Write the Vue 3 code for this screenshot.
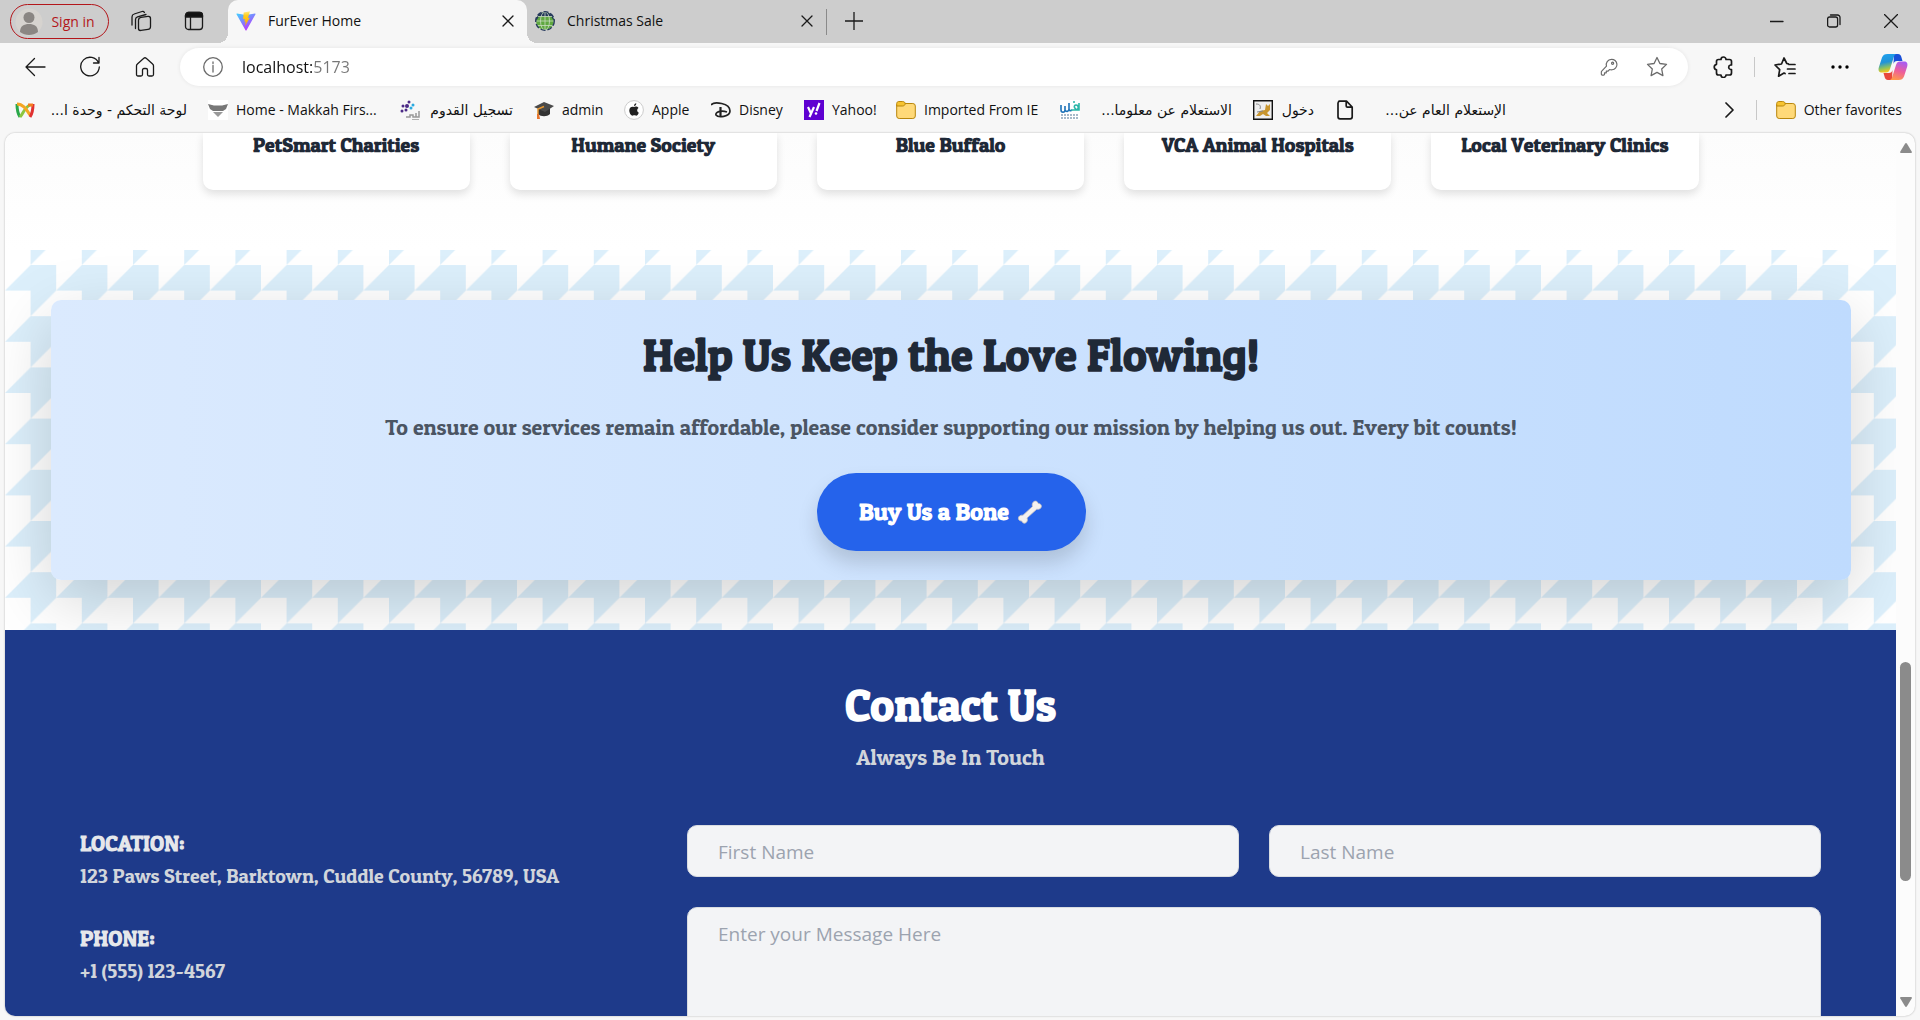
<script setup>
const bookmarks = [
  { icon: 'ribbon', label: 'لوحة التحكم - وحدة ا...', rtl: true, width: 172 },
  { icon: 'shield', label: 'Home - Makkah Firs...', width: 171 },
  { icon: 'dots', label: 'تسجيل القدوم', rtl: true, width: 113 },
  { icon: 'cap', label: 'admin', width: 69 },
  { icon: 'apple', label: 'Apple', width: 66 },
  { icon: 'disney', label: 'Disney', width: 72 },
  { icon: 'yahoo', label: 'Yahoo!', width: 71 },
  { icon: 'folder', label: 'Imported From IE', width: 143 },
  { icon: 'daman', label: 'الاستعلام عن معلوما...', rtl: true, width: 172 },
  { icon: 'cat', label: 'دخول', rtl: true, width: 61 },
  { icon: 'page', label: 'الإستعلام العام عن...', rtl: true, width: 171 }
]

const partners = [
  'PetSmart Charities',
  'Humane Society',
  'Blue Buffalo',
  'VCA Animal Hospitals',
  'Local Veterinary Clinics'
]

const details = [
  { title: 'LOCATION:', text: '123 Paws Street, Barktown, Cuddle County, 56789, USA' },
  { title: 'PHONE:', text: '+1 (555) 123-4567' }
]
</script>

<template>
  <div class="browser">
    <header class="tabs">
      <button class="signin" type="button">
        <svg width="28" height="28" viewBox="0 0 28 28">
          <circle cx="14" cy="14" r="13.5" fill="#d6d3cf" />
          <circle cx="14" cy="9.500" r="5.500" fill="#8a8683" />
          <path d="M5 24c0-6 4-8 9-8s9 2 9 8c-5 4-13 4-18 0z" fill="#8a8683" />
        </svg>
        Sign in
      </button>
      <button class="tool workspaces" type="button" aria-label="Workspaces">
        <svg width="22" height="22" viewBox="0 0 22 22" class="line">
          <rect x="8.500" y="7" width="12" height="13" rx="2.500" transform="skewY(-8) translate(0 2)" />
          <path d="M5.500 18.500V9.500c0-1.500.7-2.300 2-2.700l8.500-2.300M2 15V7c0-1.600.8-2.600 2.200-3L12 1.500c1-.3 2 .2 2.400 1" />
        </svg>
      </button>
      <button class="tool actions" type="button" aria-label="Tab actions">
        <svg width="20" height="20" viewBox="0 0 20 20" class="line">
          <rect x="1.500" y="1.500" width="17" height="17" rx="3" />
          <path d="M1.500 6V4.500a3 3 0 0 1 3-3h11a3 3 0 0 1 3 3V6z" fill="#111" />
          <path d="M6.500 6v12" />
        </svg>
      </button>
      <div class="tab active">
        <svg width="20" height="20" viewBox="0 0 20 20">
          <defs>
            <linearGradient id="vt" x1="0" y1="0" x2=".6" y2="1">
              <stop offset="0" stop-color="#41d1ff" /><stop offset="1" stop-color="#bd34fe" />
            </linearGradient>
            <linearGradient id="vb" x1="0" y1="0" x2="0" y2="1">
              <stop offset="0" stop-color="#ffea83" /><stop offset=".3" stop-color="#ffcd1c" /><stop offset="1" stop-color="#ffa800" />
            </linearGradient>
          </defs>
          <path d="M19.500 3.200 10.500 19.300a.6.6 0 0 1-1 0L.500 3.200c-.2-.4.1-.8.5-.7l9 1.600 9-1.600c.4-.1.7.3.5.7z" fill="url(#vt)" />
          <path d="m14 .300-6.300 1.200-.6 6.800 1.900-.4-.6 2.900 1.300-.4-.7 4.500 4.800-8.200-1.800.4z" fill="url(#vb)" />
        </svg>
        <span>FurEver Home</span>
        <button type="button" aria-label="Close tab">
          <svg width="12" height="12" viewBox="0 0 12 12" class="line"><path d="m1 1 10 10M11 1 1 11" /></svg>
        </button>
      </div>
      <div class="tab">
        <svg width="20" height="20" viewBox="0 0 20 20">
          <circle cx="10" cy="10" r="9" fill="#5fa840" />
          <path d="M1 10a9 9 0 0 1 18 0l-3-4.500H4z" fill="#24365c" />
          <path d="M10 1v18M1 10h18M3 5.500h14M3 14.500h14" stroke="#c9dcc0" stroke-width=".8" fill="none" />
          <ellipse cx="10" cy="10" rx="4.500" ry="9" stroke="#c9dcc0" stroke-width=".8" fill="none" />
          <circle cx="10" cy="10" r="9.300" fill="none" stroke="#24365c" stroke-width="1.300" stroke-dasharray="5 2" />
        </svg>
        <span>Christmas Sale</span>
        <button type="button" aria-label="Close tab">
          <svg width="12" height="12" viewBox="0 0 12 12" class="line"><path d="m1 1 10 10M11 1 1 11" /></svg>
        </button>
      </div>
      <i class="tab-rule"></i>
      <button class="tool" type="button" aria-label="New tab">
        <svg width="18" height="18" viewBox="0 0 18 18" class="line"><path d="M9 0v18M0 9h18" /></svg>
      </button>
      <div class="window">
        <button type="button" aria-label="Minimize">
          <svg width="14" height="14" viewBox="0 0 14 14" class="line"><path d="M0 7.500h13" /></svg>
        </button>
        <button type="button" aria-label="Restore">
          <svg width="14" height="14" viewBox="0 0 14 14" class="line">
            <rect x=".6" y="3" width="10" height="10" rx="2" /><path d="M3.500 1h7A2.500 2.500 0 0 1 13 3.500v7" />
          </svg>
        </button>
        <button type="button" aria-label="Close">
          <svg width="14" height="14" viewBox="0 0 14 14" class="line"><path d="m.500.500 13 13M13.500.500l-13 13" /></svg>
        </button>
      </div>
    </header>

    <nav class="toolbar">
      <button type="button" aria-label="Back">
        <svg width="22" height="20" viewBox="0 0 22 20" class="line"><path d="M21 10H2M10.500 1.500 2 10l8.500 8.500" /></svg>
      </button>
      <button type="button" aria-label="Refresh">
        <svg width="22" height="22" viewBox="0 0 22 22" class="line"><path d="M19.600 7A9.300 9.300 0 1 0 20.300 11M20 1.500V7h-5.500" /></svg>
      </button>
      <button type="button" aria-label="Home">
        <svg width="20" height="22" viewBox="0 0 20 22" class="line">
          <path d="M1.500 9.800c0-.8.3-1.400.9-1.900l6.400-5.600c.7-.6 1.700-.6 2.400 0l6.400 5.600c.6.5.9 1.100.9 1.900v8.700c0 .8-.6 1.500-1.500 1.500h-3c-.8 0-1.500-.7-1.500-1.500V14c0-.8-.6-1.500-1.500-1.500h-2c-.9 0-1.500.7-1.500 1.500v4.500c0 .8-.7 1.500-1.500 1.500H3c-.9 0-1.500-.7-1.500-1.500z" />
        </svg>
      </button>
      <div class="address">
        <svg width="22" height="22" viewBox="0 0 22 22" class="line grey"><circle cx="11" cy="11" r="9.300" /><path d="M11 9.500V16M11 6v1.500" /></svg>
        <input type="text" value="localhost:5173" aria-label="Address" />
        <svg width="18" height="18" viewBox="0 0 20 20" class="line grey">
          <path d="M12.500 1.500a5.800 5.800 0 0 1 1 11.600c-1 .2-2 0-3-.3L9 14.500H7v2H5V18c0 .5-.4 1-1 1H2.500c-.6 0-1-.4-1-1v-2.500c0-.4.2-.7.4-.9L7.200 9a5.800 5.800 0 0 1 5.300-7.500z" /><circle cx="14" cy="5.800" r="1.200" />
        </svg>
        <svg width="22" height="22" viewBox="0 0 22 22" class="line grey"><path d="m11 1.500 2.900 6 6.600.9-4.800 4.600 1.200 6.600-5.900-3.200-5.900 3.200L6.300 13 1.500 8.400l6.600-.9z" /></svg>
      </div>
      <button class="ext" type="button" aria-label="Extensions">
        <svg width="22" height="22" viewBox="0 0 22 22" class="line bold">
          <path d="M8 3.500a2.500 2.500 0 0 1 5 0h3.500c1 0 2 .8 2 2V9h-1a2.300 2.300 0 0 0 0 4.500h1V17c0 1-1 2-2 2H13a2.500 2.500 0 0 1-5 0H5.500c-1 0-2-1-2-2v-3.200a2.800 2.800 0 0 1 0-5.500V5.500c0-1.200 1-2 2-2z" />
        </svg>
      </button>
      <i class="rule"></i>
      <button class="favs" type="button" aria-label="Favorites">
        <svg width="22" height="22" viewBox="0 0 22 22" class="line bold">
          <path d="M11 17.500 10 17l-5.400 3.200 1.100-6.500L1 9l6.500-1L10 2l2.800 5.500 1.500.3M15 8.500h6M13.500 13h7.500M15 17.500h6" />
        </svg>
      </button>
      <button class="dots" type="button" aria-label="Settings and more">
        <svg width="18" height="4" viewBox="0 0 18 4"><circle cx="2" cy="2" r="1.700" /><circle cx="9" cy="2" r="1.700" /><circle cx="16" cy="2" r="1.700" /></svg>
      </button>
      <button type="button" aria-label="Copilot">
        <svg width="30" height="28" viewBox="0 0 30 28">
          <defs>
            <linearGradient id="ca" x1="0" y1="0" x2=".2" y2="1">
              <stop offset="0" stop-color="#1fa2f0" /><stop offset=".5" stop-color="#2193d8" /><stop offset=".8" stop-color="#8fc35c" /><stop offset="1" stop-color="#f2c61f" />
            </linearGradient>
            <linearGradient id="cb" x1=".6" y1="0" x2=".3" y2="1">
              <stop offset="0" stop-color="#a95cf0" /><stop offset=".5" stop-color="#ee5e9a" /><stop offset="1" stop-color="#ff9a4a" />
            </linearGradient>
          </defs>
          <path d="M16 1h4c2 0 3 1.500 3.500 3.500L24.500 8H19c-2 0-3 1-3.500 3z" fill="#1a50d8" />
          <path d="M9.500 1H18c-1.500.7-2 2-2.500 4l-3.500 11c-.8 2.500-2 3.500-4 3.500H4c-3 0-4-2-3.200-5L4 4.500C5 2 6.500 1 9.500 1z" fill="url(#ca)" />
          <path d="M14 27h-4c-2 0-3-1.500-3.500-3.500L5.500 20H11c2 0 3-1 3.500-3z" fill="#e8483c" />
          <path d="M20.500 27H12c1.500-.7 2-2 2.500-4L18 12c.8-2.500 2-3.500 4-3.500h4c3 0 4 2 3.200 5L26 23.500c-1 2.500-2.500 3.500-5.500 3.500z" fill="url(#cb)" />
        </svg>
      </button>
    </nav>

    <nav class="bookmarks">
      <a v-for="b in bookmarks" :key="b.label" href="#" :style="{ width: b.width + 'px' }" :class="{ wide: b.rtl }">
        <svg width="20" height="20" viewBox="0 0 20 20">
          <g v-if="b.icon === 'ribbon'" fill="none" stroke-width="3">
            <path d="M2 4c0 6 1 10 3 13" stroke="#2aa84a" /><path d="M5 17C8 14 9 8 15 5" stroke="#8cc63f" />
            <path d="M2 4c6 0 9 5 13 11" stroke="#f5a623" /><path d="M18 4c0 6-1 10-3 13" stroke="#e03131" /><path d="M13 5h5" stroke="#f57c1f" />
          </g>
          <g v-else-if="b.icon === 'shield'">
            <path d="M0 0h20v20H0z" fill="#fff" /><path d="m0 4 6 1.500h8L20 4l-2 5-3 2H5L2 9z" fill="#777" /><path d="M5 12h10l-5 5z" fill="#999" />
          </g>
          <g v-else-if="b.icon === 'dots'">
            <g fill="#4b2a86"><circle cx="9" cy="2" r="1.500" /><circle cx="3" cy="6" r="1.500" /><circle cx="7" cy="6" r="2" /><circle cx="6" cy="10" r="1.500" /><circle cx="2" cy="11" r="1.500" /></g>
            <g fill="#29a9e0"><circle cx="13" cy="5" r="1.500" /><circle cx="11" cy="8" r="1.500" /></g>
            <path d="M6 17h4v-2h3v2h3v-4M16 17h3v-6M12 20h7" stroke="#999" stroke-width="1.500" fill="none" />
          </g>
          <g v-else-if="b.icon === 'cap'">
            <path d="M4 8h12v6c-3 3-9 3-12 0z" fill="#333" /><path d="m0 7 10-5 10 4-9 6z" fill="#4a4a4a" /><path d="M10 6.500 4 9v6" stroke="#e8962e" stroke-width="1.500" fill="none" /><path d="M3 14h2l1 5H3z" fill="#e8762e" />
          </g>
          <g v-else-if="b.icon === 'apple'">
            <circle cx="10" cy="10" r="9.400" fill="#fff" stroke="#ccc" />
            <path d="M10 7c1-.7 3.500-.8 4.500 1-2 1.200-1.500 4 .3 4.700C14 15 12.800 16 11.700 15.600c-1-.4-1.800-.4-2.700 0C7 16.300 5 12.500 5.300 10 5.600 7 8 6.200 10 7zM10 6c0-1.500 1-2.700 2.300-2.800C12.400 4.800 11.400 6 10 6z" fill="#222" />
          </g>
          <g v-else-if="b.icon === 'disney'" fill="none" stroke="#222">
            <path d="M0 5C3 1 19 3 19 11c0 6-12 7-14 4-1-3 5-5 11-3" stroke-width="1.700" /><path d="M9.500 7v9" stroke-width="2.200" />
          </g>
          <g v-else-if="b.icon === 'yahoo'">
            <path d="M0 0h20v20H0z" fill="#5f01d1" /><path d="m4 7 3 6.500M10 7l-4.500 10M15.500 3l-3 8" stroke="#fff" stroke-width="2.200" fill="none" /><circle cx="12" cy="13.500" r="1.300" fill="#fff" />
          </g>
          <g v-else-if="b.icon === 'folder'" stroke="#b8860b">
            <rect x=".7" y="3.500" width="18.600" height="15" rx="2.500" fill="#ffd978" /><path d="M.7 6V3.500c0-1 .8-2 2-2h4c1.500 0 2.500 1 2.500 2.200S8 6 6.700 6z" fill="#f7c331" />
          </g>
          <g v-else-if="b.icon === 'daman'" fill="none">
            <path d="M0 0h20v20H0z" fill="#fff" /><path d="M1 5v5c0 3 4 3 4 0V6m0 4c1 2 4 2 4-1V3M9 9c0 2 2 2 3 1" stroke="#1d72b8" stroke-width="1.600" /><path d="M11 10h5c3 0 3-5 0-5s-2 5 3 5V3M13 2h2" stroke="#2bb6a8" stroke-width="1.600" /><path d="M1 15h18M1 18h18" stroke="#8aa2b8" stroke-width="1.500" stroke-dasharray="2 1" />
          </g>
          <g v-else-if="b.icon === 'cat'">
            <path d="M.7.700h18.600v18.600H.700z" fill="#eee" stroke="#111" stroke-width="1.400" /><path d="m3 16 4-5 5-1 1-6 2 2 2-2v6l-3 3 3 3h-4l-3-2-3 2z" fill="#c8952e" /><path d="M3 4c4 0 5 2 4 5M4 12l6-1" stroke="#888" fill="none" />
          </g>
          <path v-else d="M4 1.200h7.500L17.200 7v9.800a2 2 0 0 1-2 2H5a2 2 0 0 1-2-2V3a2 2 0 0 1 2-1.800M11.200 1.200V6c0 .8.500 1.200 1.200 1.200h4.800" class="line bold" />
        </svg>
        <span :dir="b.rtl ? 'rtl' : 'ltr'" :class="{ arabic: b.rtl }">{{ b.label }}</span>
      </a>
      <button type="button" class="more" aria-label="More favorites">
        <svg width="10" height="16" viewBox="0 0 10 16" class="line bold"><path d="m1 1 7 7-7 7" /></svg>
      </button>
      <i class="rule"></i>
      <a href="#" class="other">
        <svg width="20" height="20" viewBox="0 0 20 20" stroke="#b8860b">
          <rect x=".7" y="3.500" width="18.600" height="15" rx="2.500" fill="#ffd978" /><path d="M.7 6V3.500c0-1 .8-2 2-2h4c1.500 0 2.500 1 2.500 2.200S8 6 6.700 6z" fill="#f7c331" />
        </svg>
        <span>Other favorites</span>
      </a>
    </nav>

    <div class="viewport">
      <main class="page">
        <section class="partners">
          <ul>
            <li v-for="p in partners" :key="p">{{ p }}</li>
          </ul>
        </section>

        <section class="support">
          <div class="banner">
            <h2>Help Us Keep the Love Flowing!</h2>
            <p>To ensure our services remain affordable, please consider supporting our mission by helping us out. Every bit counts!</p>
            <button type="button">
              Buy Us a Bone
              <svg width="26" height="26" viewBox="0 0 26 26">
                <path d="M15.500 7.500c-.8-2 0-4.500 2-5.200 1.700-.6 3.200.4 3.600 2.100 1.900 0 3.400 1.200 3.300 3-.1 2-2.400 3.300-4.700 2.800L10 19c.9 2 .2 4.300-1.700 5-1.600.6-3.100-.3-3.500-2-1.900.1-3.400-1-3.400-2.800 0-2 2.200-3.400 4.600-3z" fill="#f4f1ef" stroke="#c9c3c0" stroke-width=".8" />
              </svg>
            </button>
          </div>
        </section>

        <section class="contact">
          <h2>Contact Us</h2>
          <p class="lead">Always Be In Touch</p>
          <div class="columns">
            <dl>
              <div v-for="d in details" :key="d.title">
                <dt>{{ d.title }}</dt>
                <dd>{{ d.text }}</dd>
              </div>
            </dl>
            <form @submit.prevent>
              <input type="text" placeholder="First Name" aria-label="First Name" />
              <input type="text" placeholder="Last Name" aria-label="Last Name" />
              <textarea placeholder="Enter your Message Here" aria-label="Message"></textarea>
            </form>
          </div>
        </section>
      </main>
      <div class="scrollbar" aria-hidden="true">
        <svg width="12" height="10" viewBox="0 0 12 10"><path d="M5 .8a1.200 1.200 0 0 1 2 0l4.800 8c.3.600 0 1.200-.8 1.200H1c-.8 0-1.100-.6-.8-1.200z" /></svg>
        <div class="track"><i></i></div>
        <svg width="12" height="10" viewBox="0 0 12 10"><path d="M5 9.200a1.200 1.200 0 0 0 2 0l4.800-8C12.100.6 11.800 0 11 0H1C.2 0-.1.600.2 1.200z" /></svg>
      </div>
    </div>
  </div>
</template>

<style>
body {
  margin: 0;
}
</style>

<style scoped>
* {
  box-sizing: border-box;
}

.browser {
  display: flex;
  flex-direction: column;
  height: 100vh;
  overflow: hidden;
  background: #f7f7f7;
  color: #111;
  font: 14px/20px "Segoe UI", "Open Sans", sans-serif;
}

button {
  display: flex;
  align-items: center;
  justify-content: center;
  padding: 0;
  border: 0;
  background: none;
  color: inherit;
  font: inherit;
}

svg {
  flex: none;
}

.line {
  fill: none;
  stroke: #1a1a1a;
  stroke-width: 1.3;
  stroke-linecap: round;
  stroke-linejoin: round;
}

.line.bold {
  stroke-width: 1.7;
}

.line.grey {
  stroke: #6b6b6b;
}

.tabs {
  display: flex;
  flex: none;
  align-items: center;
  height: 43px;
  padding-left: 10px;
  background: #cdcdcd;
}

.signin {
  gap: 8px;
  width: 99px;
  height: 35px;
  padding: 0 12px 0 3px;
  border: 1px solid #b3161b;
  border-radius: 18px;
  color: #b3161b;
  white-space: nowrap;
}

.tool {
  width: 54px;
  height: 43px;
  padding-bottom: 2px;
}

.workspaces {
  margin-left: 5px;
}

.actions {
  width: 52px;
  margin-right: 8px;
}

.tab {
  position: relative;
  display: flex;
  align-items: center;
  gap: 12px;
  width: 299px;
  height: 43px;
  padding: 0 13px 2px 8px;
}

.tab span {
  flex: 1;
}

.tab.active {
  border-radius: 10px 10px 0 0;
  background: #f7f7f7;
}

.tab.active::before,
.tab.active::after {
  position: absolute;
  bottom: 0;
  width: 10px;
  height: 10px;
  content: "";
}

.tab.active::before {
  right: 100%;
  background: radial-gradient(circle at 0 0, #cdcdcd 10px, #f7f7f7 10px);
}

.tab.active::after {
  left: 100%;
  background: radial-gradient(circle at 100% 0, #cdcdcd 10px, #f7f7f7 10px);
}

.tab-rule {
  width: 1px;
  height: 26px;
  background: #8a8a8a;
}

.window {
  display: flex;
  margin: 0 1px 0 auto;
}

.window button {
  width: 57px;
  height: 43px;
  padding-bottom: 2px;
}

.toolbar {
  display: flex;
  flex: none;
  align-items: center;
  height: 47px;
  padding-left: 7px;
}

.toolbar > button {
  width: 55px;
  height: 40px;
}

.toolbar > .ext {
  width: 60px;
  margin-left: 6px;
}

.toolbar > .favs {
  width: 60px;
}

.toolbar > .dots {
  width: 50px;
}

.address {
  display: flex;
  flex: 1;
  align-items: center;
  gap: 28px;
  height: 38px;
  margin-left: 8px;
  padding: 0 20px 0 22px;
  border-radius: 19px;
  background: #fff;
  box-shadow: 0 0 4px rgba(0, 0, 0, 0.08);
}

.address input {
  flex: 1;
  min-width: 0;
  margin-left: -10px;
  padding: 0;
  border: 0;
  outline: 0;
  background: linear-gradient(90deg, #111 70px, #767676 70px);
  background-clip: text;
  color: transparent;
  font: 16px/24px "Segoe UI", "Open Sans", sans-serif;
}

.rule {
  width: 1px;
  height: 20px;
  background: #c8c8c8;
}

.bookmarks {
  display: flex;
  flex: none;
  align-items: center;
  gap: 21px;
  height: 42px;
  padding: 0 18px 2px 15px;
}

.bookmarks a {
  display: flex;
  flex: none;
  align-items: center;
  gap: 8px;
  color: #111;
  text-decoration: none;
  white-space: nowrap;
}

.bookmarks a.wide {
  justify-content: space-between;
}

.arabic {
  font-family: "Segoe UI", "DejaVu Sans", sans-serif;
  font-size: 14px;
}

.more {
  width: 20px;
  height: 30px;
  margin: 0 -5px 0 auto;
}

.bookmarks .rule {
  margin-right: -2px;
}

.viewport {
  display: flex;
  flex: 1;
  min-height: 0;
  margin: 1px 5px 4px;
  overflow: hidden;
  border-radius: 10px;
  background: #fcfcfc;
  box-shadow: 0 0 2px rgba(0, 0, 0, 0.3);
}

.page {
  flex: 1;
  min-width: 0;
  overflow: hidden;
  font-family: "Patua One", "Bree Serif", "Liberation Serif", serif;
}

.partners {
  padding: 0 75px 60px;
  background: linear-gradient(#fcfcfc, #fff);
}

.partners ul {
  display: grid;
  grid-template-columns: repeat(5, 1fr);
  gap: 40px;
  max-width: 1496px;
  margin: 0 auto;
  padding: 0;
  list-style: none;
}

.partners li {
  padding-bottom: 33px;
  border-radius: 0 0 10px 10px;
  background: #fff;
  box-shadow: 0 4px 8px rgba(0, 0, 0, 0.12);
  color: #1f2937;
  font-size: 20px;
  font-weight: 700;
  line-height: 24px;
  text-align: center;
}

.support {
  padding: 50px 45px 50px 46px;
  overflow: hidden;
  background: #fff url("data:image/svg+xml,%3Csvg xmlns='http://www.w3.org/2000/svg' viewBox='0 0 20 20'%3E%3Cdefs%3E%3Cpattern id='h' width='4' height='4' patternUnits='userSpaceOnUse'%3E%3Cpath d='M2 0h2v2L2 4V2H0z' fill='%23dceffb'/%3E%3C/pattern%3E%3C/defs%3E%3Cpath d='M0 0h20v20H0z' fill='url(%23h)'/%3E%3C/svg%3E") 0 15px / 256px 256px;
}

.banner {
  display: flex;
  flex-direction: column;
  align-items: center;
  padding: 30px 30px 29px;
  border-radius: 10px;
  background: linear-gradient(to right, #dbeafe, #bfdbfe);
  box-shadow: 0 20px 66px rgba(0, 0, 0, 0.17);
  text-align: center;
}

h2 {
  margin: 0;
  font-size: 45px;
  font-weight: 700;
  line-height: 50px;
}

.banner h2 {
  color: #1f2937;
}

.banner p {
  margin: 28px 0 27px;
  color: #4b5563;
  font-size: 22px;
  line-height: 38px;
}

.banner button {
  gap: 8px;
  width: 269px;
  height: 78px;
  border-radius: 39px;
  background: #2563eb;
  box-shadow: 0 12px 20px rgba(0, 0, 0, 0.15);
  color: #fff;
  font-size: 24px;
  font-weight: 700;
}

.contact {
  padding: 50px 75px;
  background: #1e3a8a;
  color: #fff;
  text-align: center;
}

.lead {
  margin: 10px 0 51px;
  color: #d1d5db;
  font-size: 22px;
  line-height: 34px;
}

.columns {
  display: grid;
  grid-template-columns: 1fr 2fr;
  gap: 40px;
  text-align: left;
}

dl {
  display: flex;
  flex-direction: column;
  gap: 32px;
  margin: 0;
  padding-top: 3px;
  line-height: 30px;
}

dt {
  color: #e5e7eb;
  font-size: 22px;
  font-weight: 700;
}

dd {
  margin: 3px 0 0;
  color: #d1d5db;
  font-size: 20px;
  white-space: nowrap;
}

form {
  display: grid;
  grid-template-columns: 1fr 1fr;
  gap: 30px;
}

form input,
form textarea {
  width: 100%;
  height: 52px;
  padding: 2px 30px 0;
  border: 1px solid #d9dce1;
  border-radius: 10px;
  background: #f3f4f6;
  font: 19px/28px "Segoe UI", "Open Sans", sans-serif;
}

form textarea {
  grid-column: span 2;
  height: 190px;
  padding-top: 12px;
  resize: none;
}

::placeholder {
  color: #9ca3af;
  opacity: 1;
}

.scrollbar {
  display: flex;
  flex: none;
  flex-direction: column;
  align-items: center;
  width: 19px;
  padding: 10px 0 9px;
  fill: #8b8b8b;
}

.track {
  display: flex;
  flex: 1;
  flex-direction: column;
  align-items: center;
}

.track::before {
  flex: 603;
  content: "";
}

.track i {
  flex: 260;
  width: 11px;
  border-radius: 6px;
  background: #8b8b8b;
}

.track::after {
  flex: 137;
  content: "";
}
</style>
